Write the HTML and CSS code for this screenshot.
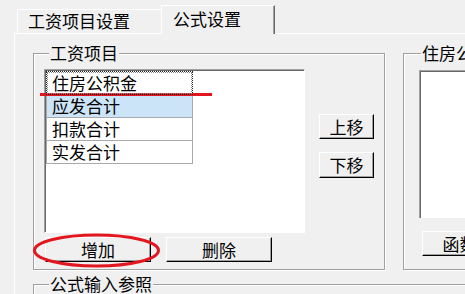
FILE: index.html
```html
<!DOCTYPE html>
<html lang="zh-CN">
<head>
<meta charset="utf-8">
<title>公式设置</title>
<link rel="stylesheet" href="styles.css">
</head>
<body>
<div class="window">
  <div class="tabs">
    <div class="tab">工资项目设置</div>
    <div class="tab active">公式设置</div>
  </div>
  <div class="panel">
    <div class="groups">
      <div class="group group-items">
        <div class="legend">工资项目</div>
        <div class="items-body">
          <div class="left-col">
            <div class="listbox">
              <div class="item focus">住房公积金</div>
              <div class="item selected">应发合计</div>
              <div class="item">扣款合计</div>
              <div class="item">实发合计</div>
            </div>
            <div class="btn-row">
              <button class="btn wide">增加</button>
              <button class="btn wide">删除</button>
            </div>
          </div>
          <div class="move-col">
            <button class="btn small">上移</button>
            <button class="btn small">下移</button>
          </div>
        </div>
      </div>
      <div class="group group-formula">
        <div class="legend">住房公积金</div>
        <div class="formula-box"></div>
        <button class="btn func">函数</button>
      </div>
    </div>
    <div class="group group-ref">
      <div class="legend">公式输入参照</div>
    </div>
  </div>
  <svg class="annot" width="465" height="294" viewBox="0 0 465 294">
    <line x1="40" y1="94.5" x2="212" y2="94.5" stroke="#e3161f" stroke-width="3"/>
    <ellipse cx="96.5" cy="250.5" rx="62" ry="15.5" fill="none" stroke="#e3161f" stroke-width="3"/>
  </svg>
</div>
</body>
</html>
```
FILE: styles.css
```css
* { box-sizing: border-box; }
html, body { margin: 0; padding: 0; background: #f0f0f0; }
body {
  font-family: "Noto Sans CJK SC", "Noto Sans", sans-serif;
  font-size: 17px;
  color: #000;
}
.window {
  position: relative;
  width: 465px;
  height: 294px;
  overflow: hidden;
  background: #f0f0f0;
}
.tabs {
  display: flex;
  align-items: flex-end;
  height: 33px;
  padding-left: 17px;
}
.tab {
  width: 144px;
  height: 24px;
  border-top: 1px solid #fff;
  border-left: 1px solid #fff;
  border-top-left-radius: 2px;
  padding-left: 10px;
  line-height: 22px;
  white-space: nowrap;
}
.tab.active {
  position: relative;
  z-index: 1;
  width: 114px;
  height: 29px;
  margin-bottom: -1px;
  background: #f0f0f0;
  border-right: 1px solid #696969;
  box-shadow: inset -1px 0 0 #a0a0a0;
  padding-left: 11px;
  line-height: 26px;
}
.panel {
  margin-left: 14px;
  height: 261px;
  border-top: 1px solid #fff;
  border-left: 1px solid #fff;
}
.groups {
  display: flex;
  gap: 18px;
  padding: 19px 0 0 18px;
}
.group {
  border: 1px solid #a0a0a0;
  box-shadow: inset 1px 1px 0 #fff, 1px 1px 0 #fff;
  height: 217px;
  flex-shrink: 0;
}
.group-items { width: 352px; }
.group-formula { width: 200px; }
.legend {
  width: fit-content;
  margin: -10px 0 -8px 15px;
  padding: 0 1px;
  line-height: 18px;
  background: #f0f0f0;
  white-space: nowrap;
}
.group-formula .legend { margin-left: 17px; }
.items-body {
  display: flex;
  padding: 15px 0 0 10px;
}
.listbox {
  width: 261px;
  height: 164px;
  background: #fff;
  border-top: 1px solid #a0a0a0;
  border-left: 1px solid #a0a0a0;
  border-right: 1px solid #fff;
  border-bottom: 1px solid #fff;
  box-shadow: inset 1px 1px 0 #696969;
  padding: 1px 0 0 1px;
}
.item {
  width: 147px;
  height: 24px;
  margin-top: -1px;
  border: 1px solid #a9a9a9;
  padding-left: 5px;
  line-height: 22px;
  white-space: nowrap;
}
.item:first-child { margin-top: 0; }
.item.focus {
  position: relative;
  z-index: 1;
  border: 1px dotted #222;
  outline: 1px dotted #888;
  outline-offset: -2px;
}
.item.selected { background: #cce4f7; }
.btn-row {
  display: flex;
  gap: 15px;
  margin-top: 4px;
  padding-left: 1px;
}
.btn {
  font: inherit;
  color: #000;
  background: #f0f0f0;
  border: 1px solid;
  border-color: #fff #000 #000 #fff;
  box-shadow: inset -1px -1px 0 #a0a0a0;
  padding: 0;
  height: 25px;
  line-height: 22px;
  text-align: center;
}
.btn.wide { width: 106px; }
.move-col {
  display: flex;
  flex-direction: column;
  gap: 13px;
  margin-left: 14px;
  padding-top: 45px;
}
.btn.small { width: 55px; }
.btn.small + .btn.small { height: 26px; }
.formula-box {
  margin: 16px 0 0 15px;
  height: 148px;
  width: 190px;
  background: #fff;
  border-top: 1px solid #a0a0a0;
  border-left: 1px solid #a0a0a0;
  box-shadow: inset 1px 1px 0 #696969;
}
.btn.func {
  display: block;
  margin: 13px 0 0 18px;
  width: 75px;
}
.group-ref {
  margin: 14px 0 0 18px;
  width: 500px;
  height: 100px;
}
.annot {
  position: absolute;
  left: 0;
  top: 0;
  pointer-events: none;
}
```
